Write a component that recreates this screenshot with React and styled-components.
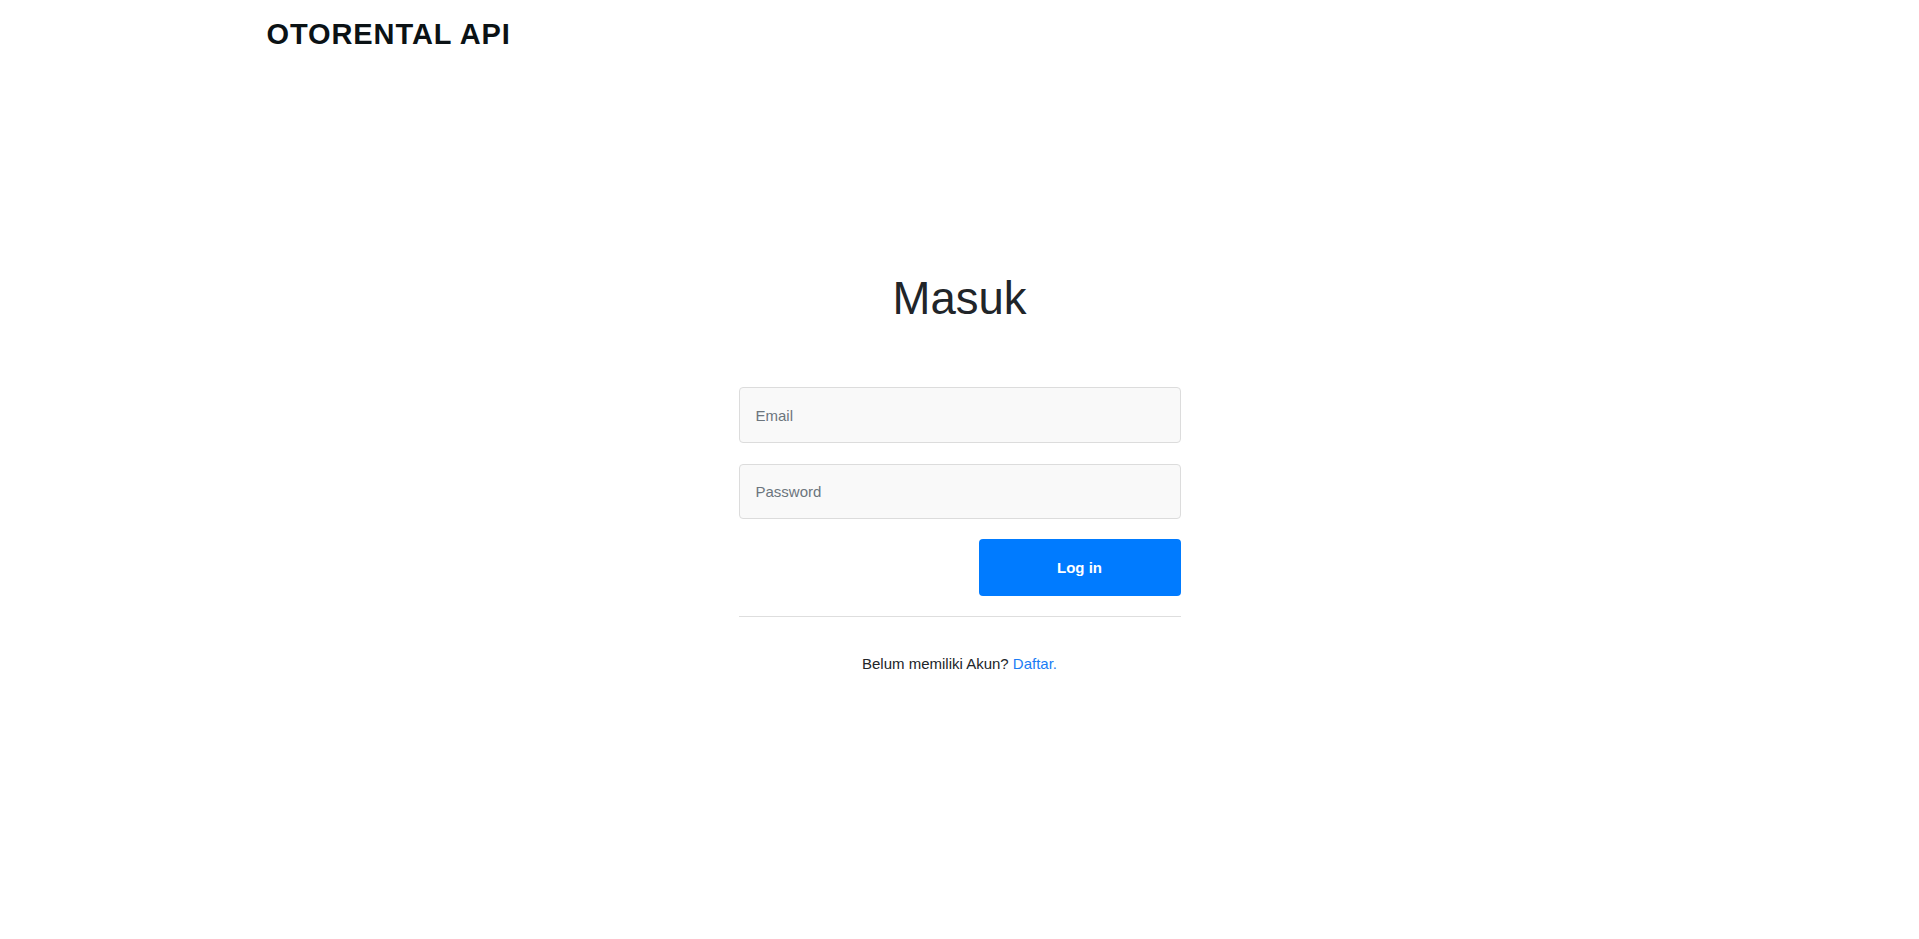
import styled, { createGlobalStyle } from 'styled-components'

const GlobalStyle = createGlobalStyle`
  * { box-sizing: border-box; }
  body {
    margin: 0;
    background: #fff;
    font-family: "Liberation Sans", Arial, sans-serif;
    color: #212529;
  }
`

const Header = styled.header`
  max-width: 1400px;
  margin: 0 auto;
  padding: 18px 7px 0;
  height: 50px;
`

const Brand = styled.div`
  font-size: 29px;
  line-height: 32px;
  font-weight: 700;
  letter-spacing: 0.9px;
  color: #0b1215;
`

const Main = styled.main`
  width: 442px;
  margin: 222px auto 0;
  display: flex;
  flex-direction: column;
`

const Title = styled.h1`
  margin: 0 0 61px;
  font-size: 45.5px;
  line-height: 54px;
  font-weight: 400;
  text-align: center;
  color: #212529;
`

const Form = styled.form`
  display: flex;
  flex-direction: column;
  gap: 21px;
`

const Input = styled.input`
  width: 100%;
  height: ${(props) => props.h || 56}px;
  padding: 0 16px;
  border: 1px solid #dcdcdc;
  border-radius: 4px;
  background: #f9f9f9;
  font-family: inherit;
  font-size: 15px;
  color: #495057;
  outline: none;

  &::placeholder {
    color: #6c757d;
  }
`

const Actions = styled.div`
  display: flex;
  justify-content: flex-end;
  margin-top: -1px;
`

const Button = styled.button`
  width: 202px;
  height: 57px;
  border: none;
  border-radius: 4px;
  background: #007bff;
  color: #fff;
  font-family: inherit;
  font-size: 15px;
  font-weight: 700;
  cursor: pointer;
`

const Divider = styled.hr`
  margin: 20px 0 0;
  border: none;
  border-top: 1px solid #dedede;
`

const Footer = styled.p`
  margin: 38px 0 0;
  font-size: 15px;
  line-height: 18px;
  text-align: center;
  color: #212529;
`

const Link = styled.a`
  color: #1a7cf5;
  text-decoration: none;
`

export default function App() {
  return (
    <>
      <GlobalStyle />
      <Header>
        <Brand>OTORENTAL API</Brand>
      </Header>
      <Main>
        <Title>Masuk</Title>
        <Form onSubmit={(e) => e.preventDefault()}>
          <Input type="email" placeholder="Email" />
          <Input type="password" placeholder="Password" h={55} />
          <Actions>
            <Button type="submit">Log in</Button>
          </Actions>
        </Form>
        <Divider />
        <Footer>
          Belum memiliki Akun? <Link href="#">Daftar.</Link>
        </Footer>
      </Main>
    </>
  )
}
